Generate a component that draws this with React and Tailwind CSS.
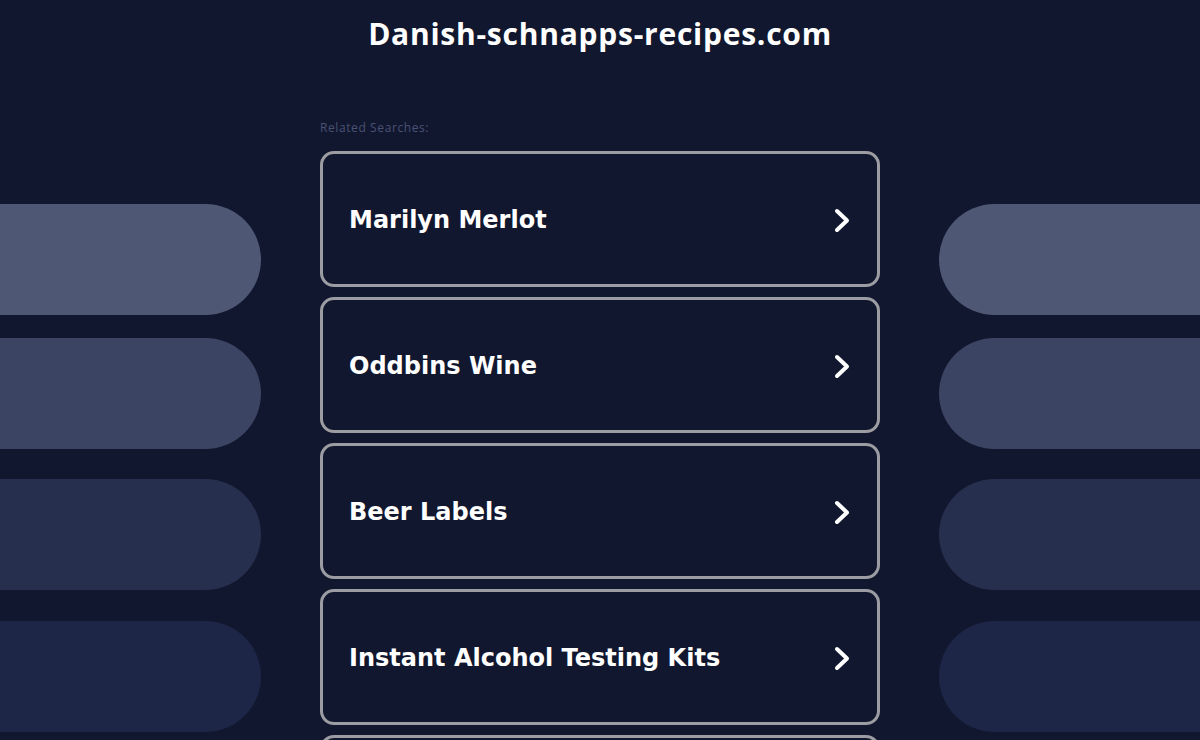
import React from "react";

const items = [
  "Marilyn Merlot",
  "Oddbins Wine",
  "Beer Labels",
  "Instant Alcohol Testing Kits",
];

function Chevron() {
  return (
    <svg width="18" height="27" viewBox="0 0 18 27" fill="none" className="shrink-0">
      <polyline
        points="4,4 14,13.5 4,23"
        stroke="#ffffff"
        strokeWidth="4"
        strokeLinecap="round"
        strokeLinejoin="round"
      />
    </svg>
  );
}

function Pill({ side, color, mt }) {
  return (
    <div
      className={`h-[111px] w-full ${color} ${mt} ${
        side === "left" ? "rounded-r-full" : "rounded-l-full"
      }`}
    />
  );
}

function PillColumn({ side }) {
  return (
    <div className="w-[261px] pt-[104px] flex flex-col shrink-0">
      <Pill side={side} color="bg-[#4e5773]" mt="mt-0" />
      <Pill side={side} color="bg-[#3b4462]" mt="mt-[23px]" />
      <Pill side={side} color="bg-[#272f4e]" mt="mt-[30px]" />
      <Pill side={side} color="bg-[#1d2646]" mt="mt-[31px]" />
    </div>
  );
}

export default function App() {
  return (
    <div className="h-[740px] w-full overflow-hidden bg-[#11172e]">
      <h1
        className="pt-[14px] text-center text-[30px] leading-[40px] font-bold text-white tracking-[0.75px]"
        style={{ fontFamily: '"Open Sans", "Liberation Sans", sans-serif' }}
      >
        Danish-schnapps-recipes.com
      </h1>
      <div className="mt-[46px] flex justify-between">
        <PillColumn side="left" />
        <div className="w-[560px] shrink-0">
          <div
            className="mt-[21px] mb-[16px] text-[12px] leading-[14px] text-[#4a5275] tracking-[0.6px]"
            style={{ fontFamily: '"Open Sans", "Liberation Sans", sans-serif' }}
          >
            Related Searches:
          </div>
          <div className="flex flex-col gap-[10px]">
            {items.map((t) => (
              <div
                key={t}
                className="h-[136px] rounded-[14px] border-[3px] border-[#9c9da3] pl-[26px] pr-[26px] pt-[2px] flex items-center justify-between"
              >
                <span
                  className="text-[24px] font-bold text-white"
                  style={{ fontFamily: '"DejaVu Sans", Verdana, sans-serif' }}
                >
                  {t}
                </span>
                <Chevron />
              </div>
            ))}
            <div className="h-[136px] rounded-[14px] border-[3px] border-[#9c9da3]" />
          </div>
        </div>
        <PillColumn side="right" />
      </div>
    </div>
  );
}
